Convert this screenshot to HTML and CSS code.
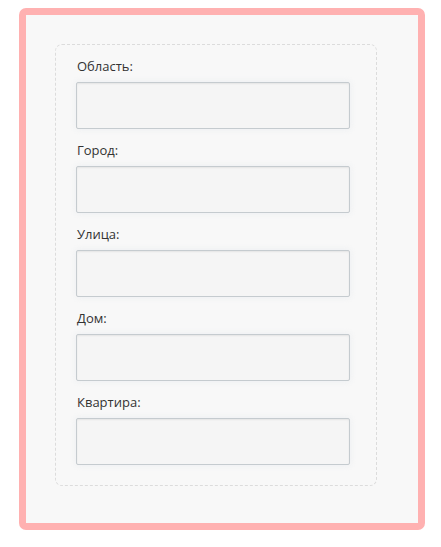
FILE: index.html
```html
<!DOCTYPE html>
<html lang="ru">
<head>
<meta charset="utf-8">
<link rel="stylesheet" href="styles.css">
</head>
<body>
<div class="frame">
  <form class="address">
    <label class="field"><span class="field-label">Область:</span><input class="field-input" type="text"></label>
    <label class="field"><span class="field-label">Город:</span><input class="field-input" type="text"></label>
    <label class="field"><span class="field-label">Улица:</span><input class="field-input" type="text"></label>
    <label class="field"><span class="field-label">Дом:</span><input class="field-input" type="text"></label>
    <label class="field"><span class="field-label">Квартира:</span><input class="field-input" type="text"></label>
  </form>
</div>
</body>
</html>
```
FILE: styles.css
```css
html, body {
  margin: 0;
  padding: 0;
  background: #ffffff;
}
body {
  font-family: "Open Sans", "Liberation Sans", sans-serif;
  font-size: 13px;
  color: #333333;
}
.frame {
  box-sizing: border-box;
  width: 406px;
  height: 522px;
  margin: 8px 0 0 19px;
  border: 7px solid #ffb1b1;
  border-radius: 7px;
  background: #f8f8f8;
  padding: 29px 0 0 29px;
}
.address {
  box-sizing: border-box;
  width: 322px;
  border: 1px dashed #dcdcdc;
  border-radius: 7px;
  padding: 12px 26px 20px 20px;
  display: flex;
  flex-direction: column;
  gap: 12px;
}
.field {
  display: flex;
  flex-direction: column;
  gap: 7px;
}
.field-label {
  line-height: 18px;
  padding-left: 1px;
}
.field-input {
  box-sizing: border-box;
  width: 274px;
  height: 47px;
  margin: 0;
  border: 1px solid #c5cbcf;
  border-radius: 2px;
  background: #f5f5f5;
  box-shadow: inset 0 1px 2px rgba(0, 0, 0, 0.07), 0 0 6px rgba(225, 230, 235, 0.6);
  outline: none;
}
```
